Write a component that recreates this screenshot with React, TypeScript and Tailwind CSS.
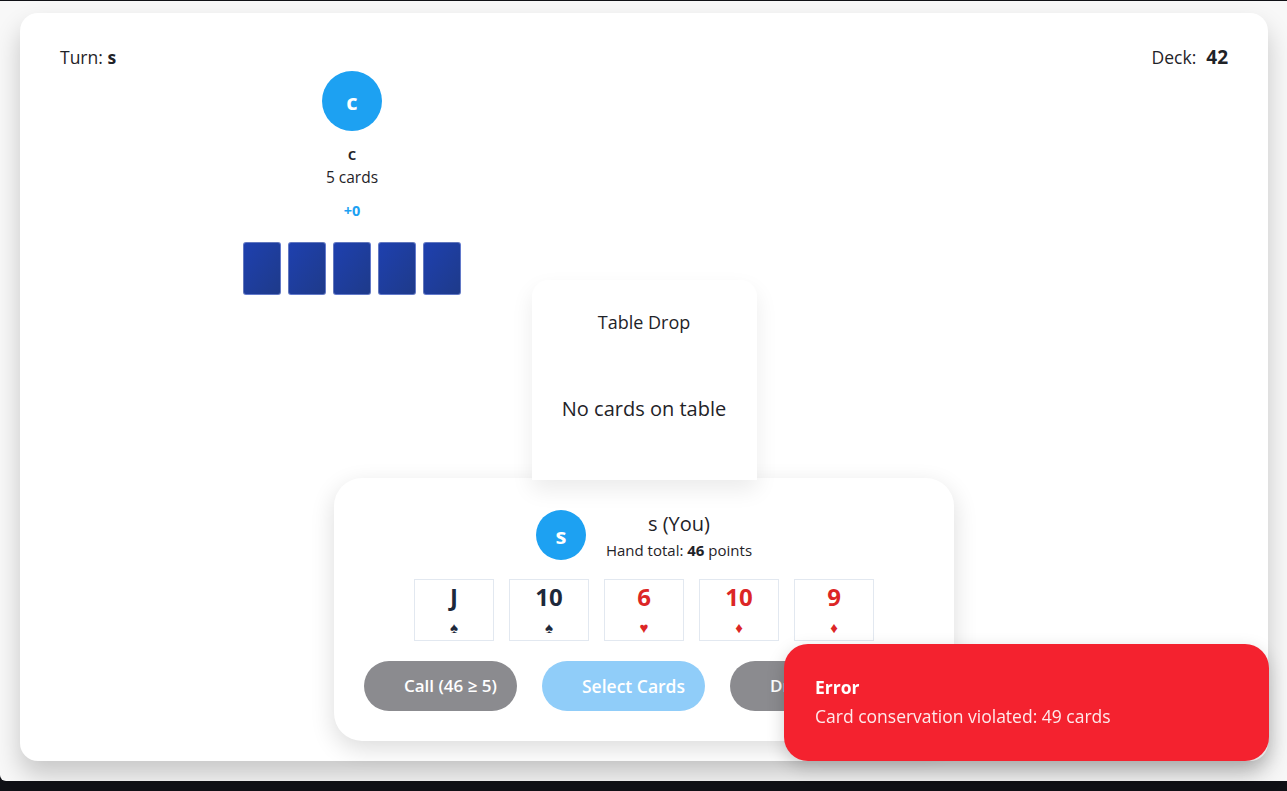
import React from 'react';

type PlayingCard = { rank: string; suit: string; red: boolean };

const hand: PlayingCard[] = [
  { rank: 'J', suit: '♠', red: false },
  { rank: '10', suit: '♠', red: false },
  { rank: '6', suit: '♥', red: true },
  { rank: '10', suit: '♦', red: true },
  { rank: '9', suit: '♦', red: true },
];

const App: React.FC = () => {
  return (
    <div
      className="h-screen bg-[#101116] pt-px overflow-hidden"
      style={{ fontFamily: '"Open Sans", "Noto Sans", sans-serif' }}
    >
      <div className="h-[780px] bg-[#f8f8f8] rounded-bl-md pt-[12px] pl-[20px] pr-[19px]">
        {/* Main table card */}
        <div className="relative h-[748px] bg-white rounded-[18px] shadow-[0_14px_26px_rgba(0,0,0,0.2)] text-[#1f2328]">
          {/* Header */}
          <div className="flex justify-between items-center px-10 pt-[32px] h-[56px]">
            <div className="text-[17.5px] leading-6">
              Turn: <span className="font-bold">s</span>
            </div>
            <div className="flex items-center gap-[10px] text-[17.5px] leading-6">
              <span>Deck:</span>
              <span className="text-[19px] font-bold">42</span>
            </div>
          </div>

          {/* Opponent seat */}
          <div className="ml-[223px] w-[218px] flex flex-col items-center mt-[2px]">
            <div className="w-[60px] h-[60px] rounded-full bg-[#1da1f2] flex items-center justify-center text-white text-[22px] font-bold">
              c
            </div>
            <div className="mt-[11px] text-[17px] leading-6 font-semibold">c</div>
            <div className="text-[15.5px] leading-5 mt-[1px]">5 cards</div>
            <div className="mt-[14px] text-[14.5px] leading-5 font-bold text-[#1da1f2]">+0</div>
            <div className="mt-[21px] flex gap-[7px]">
              {[0, 1, 2, 3, 4].map((i) => (
                <div
                  key={i}
                  className="w-[38px] h-[53px] rounded-[3px] border border-[#c7d2fe]/40 bg-gradient-to-br from-[#1e40af] to-[#1e3a8a]"
                />
              ))}
            </div>
          </div>

          {/* Table drop zone */}
          <div className="relative z-10 mx-auto mt-[-15px] w-[225px] h-[200px] bg-white rounded-t-[16px] shadow-[0_10px_22px_rgba(0,0,0,0.08)] flex flex-col items-center">
            <div className="mt-[30px] text-[18px] leading-6">Table Drop</div>
            <div className="mt-[61px] text-[20px] leading-7">No cards on table</div>
          </div>

          {/* Player panel */}
          <div className="mx-auto mt-[-2px] w-[620px] bg-white rounded-[28px] shadow-[0_8px_24px_rgba(0,0,0,0.14)] pt-[32px] pb-[30px] flex flex-col items-center">
            <div className="flex items-center gap-5">
              <div className="w-[50px] h-[50px] rounded-full bg-[#1da1f2] flex items-center justify-center text-white text-[22px] font-bold">
                s
              </div>
              <div className="flex flex-col items-center h-[50px]">
                <div className="text-[20px] leading-7">s (You)</div>
                <div className="text-[15px] leading-5 mt-[2px]">
                  Hand total: <span className="font-bold">46</span> points
                </div>
              </div>
            </div>

            <div className="mt-[19px] flex gap-[15px]">
              {hand.map((c, i) => (
                <div
                  key={i}
                  className={`w-[80px] h-[62px] border border-[#e2e8f0] bg-white flex flex-col items-center ${
                    c.red ? 'text-[#dc2626]' : 'text-[#1e293b]'
                  }`}
                >
                  <div className="mt-[2px] text-[24px] leading-[30px] font-bold">{c.rank}</div>
                  <div className="text-[15px] leading-[18px] mt-[6px]">{c.suit}</div>
                </div>
              ))}
            </div>

            <div className="mt-[20px] flex gap-[25px]">
              <button className="h-[50px] rounded-full bg-[#8b8b8f] text-white text-[17px] font-semibold pl-10 pr-5">
                Call (46 ≥ 5)
              </button>
              <button className="h-[50px] rounded-full bg-[#90cdf9] text-white text-[17.5px] font-semibold pl-10 pr-5">
                Select Cards
              </button>
              <button className="h-[50px] w-[194px] rounded-full bg-[#8b8b8f] text-white text-[17px] font-semibold pl-10 pr-5 text-left">
                Drop
              </button>
            </div>
          </div>
        </div>
      </div>

      {/* Error toast */}
      <div className="fixed z-20 right-[18px] bottom-[30px] w-[485px] h-[117px] rounded-[24px] bg-[#f4222f] shadow-[0_6px_18px_rgba(0,0,0,0.18)] pl-[31px] pt-[31px] text-white">
        <div className="text-[17.5px] leading-6 font-bold">Error</div>
        <div className="mt-[5px] text-[17.5px] leading-6 text-white/90">Card conservation violated: 49 cards</div>
      </div>
    </div>
  );
};

export default App;
